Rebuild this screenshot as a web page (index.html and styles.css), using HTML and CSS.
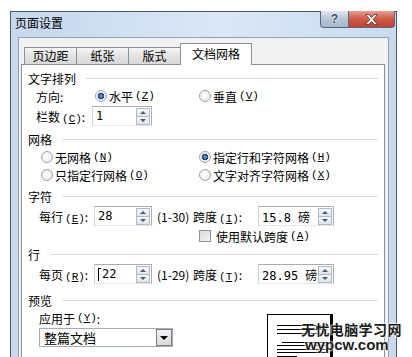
FILE: index.html
```html
<!DOCTYPE html>
<html>
<head>
	<meta charset="utf-8">
	<title>页面设置</title>
	<link rel="stylesheet" href="styles.css">
</head>
<body>
	<div class="window">
		<div class="titlebar">
			<span class="title">页面设置</span>
			<div class="caption">
				<span class="btn-help">?</span>
				<span class="btn-close">
					<svg width="13" height="11" viewBox="0 0 13 11"><path d="M0.5 0.5h3.2l2.8 3 2.8-3h3.2l-4.4 5 4.4 5h-3.2l-2.8-3-2.8 3h-3.2l4.4-5z" fill="#fff" stroke="#5b2a24" stroke-width="0.8"/></svg>
				</span>
			</div>
		</div>

		<div class="client">
			<div class="tabs">
				<span class="tab">页边距</span>
				<span class="tab">纸张</span>
				<span class="tab">版式</span>
				<span class="tab active">文档网格</span>
			</div>

			<div class="page">
				<div class="group">
					<div class="sec">文字排列</div>
					<div class="row dir-row">
						<span class="lbl-dir">方向:</span>
						<span class="opt opt-dir"><i class="radio on"></i>水平<span class="key">(<u>Z</u>)</span></span>
						<span class="opt"><i class="radio"></i>垂直<span class="key">(<u>V</u>)</span></span>
					</div>
					<div class="row field dir-row">
						<span class="lbl-cols">栏数<span class="key">(<u>C</u>)</span>:</span>
						<span class="box w60">1<i class="spin"><b class="up"></b><b class="down"></b></i></span>
					</div>
				</div>

				<div class="group">
					<div class="sec">网格</div>
					<div class="row grid-row">
						<span class="opt opt-grid"><i class="radio"></i>无网格<span class="key">(<u>N</u>)</span></span>
						<span class="opt"><i class="radio on"></i>指定行和字符网格<span class="key">(<u>H</u>)</span></span>
					</div>
					<div class="row grid-row">
						<span class="opt opt-grid"><i class="radio"></i>只指定行网格<span class="key">(<u>O</u>)</span></span>
						<span class="opt"><i class="radio"></i>文字对齐字符网格<span class="key">(<u>X</u>)</span></span>
					</div>
				</div>

				<div class="group">
					<div class="sec">字符</div>
					<div class="row field num-row">
						<span class="lbl-num">每行<span class="key">(<u>E</u>)</span>:</span>
						<span class="box w58">28<i class="spin"><b class="up"></b><b class="down"></b></i></span>
						<span class="range">(1-30)</span>
						<span class="lbl-pitch">跨度<span class="key">(<u>I</u>)</span>:</span>
						<span class="box w76">15.8 磅<i class="spin"><b class="up"></b><b class="down"></b></i></span>
					</div>
					<div class="row check-row">
						<i class="check"></i>使用默认跨度<span class="key">(<u>A</u>)</span>
					</div>
				</div>

				<div class="group tight">
					<div class="sec">行</div>
					<div class="row field num-row">
						<span class="lbl-num">每页<span class="key">(<u>R</u>)</span>:</span>
						<span class="box w58"><i class="ibeam"></i>22<i class="spin"><b class="up"></b><b class="down"></b></i></span>
						<span class="range">(1-29)</span>
						<span class="lbl-pitch">跨度<span class="key">(<u>T</u>)</span>:</span>
						<span class="box w76">28.95 磅<i class="spin"><b class="up"></b><b class="down"></b></i></span>
					</div>
				</div>

				<div class="group wide">
					<div class="sec">预览</div>
					<div class="preview-row">
						<div class="apply">
							<div class="row">应用于<span class="key">(<u>Y</u>)</span>:</div>
							<div class="select">整篇文档<i class="drop"></i></div>
						</div>
						<div class="sheet">
							<svg width="62" height="44" viewBox="0 0 62 44">
								<g stroke="#000" stroke-width="1">
									<path d="M9 10.5h50M9 14.5h50M9 18.5h50M14 27.5h45M9 30.5h50M9 34.5h50M9 37.5h50M9 41.5h20"/>
								</g>
							</svg>
						</div>
					</div>
				</div>
			</div>
		</div>
	</div>

	<div class="watermark">
		<div class="wm-cn">无忧电脑学习网</div>
		<div class="wm-en">wypcw.com</div>
	</div>
</body>
</html>
```

FILE: styles.css
```css
body {
	margin: 0;
	height: 357px;
	overflow: hidden;
	background: #fff;
	font-family: "Noto Sans CJK SC", "Microsoft YaHei", sans-serif;
	font-size: 12px;
	color: #000;
	position: relative;
}

/* window frame */
.window {
	margin: 11px 0 0 10px;
	width: 387px;
	height: 346px;
	box-sizing: border-box;
	border: 1px solid #4a586c;
	border-bottom: none;
	background: #cbd9ea;
}
.titlebar {
	height: 25px;
	display: flex;
	justify-content: space-between;
	align-items: flex-start;
	background: linear-gradient(to right, #c5d8ee, #dbe7f5 55%, #c9dbef);
}
.title {
	padding: 3px 0 0 4px;
	line-height: 16px;
}
.caption {
	display: flex;
	margin: -1px 1px 0 0;
}
.btn-help,
.btn-close {
	height: 17px;
	box-sizing: border-box;
	border: 1px solid #59657a;
	border-top: none;
	display: flex;
	align-items: center;
	justify-content: center;
}
.btn-help {
	width: 28px;
	border-right: none;
	border-radius: 0 0 0 4px;
	background: linear-gradient(#dfe6ef, #b9c6d6 50%, #a7b7cb);
	color: #3b4a60;
	font: bold 12px "Liberation Sans", sans-serif;
	text-shadow: 0 0 2px #fff, 0 0 1px #fff;
}
.btn-close {
	width: 47px;
	border-radius: 0 0 4px 0;
	background: linear-gradient(#e5a093, #cf5a47 50%, #c0432f);
}

.client {
	margin: 0 7px;
	height: 314px;
	border: 1px solid #8fa0b6;
	border-bottom: none;
	background: #f2f2f2;
	padding: 5px 3px 0 2px;
}

/* tabs */
.tabs {
	display: flex;
	align-items: flex-end;
	padding-left: 3px;
	height: 21px;
	position: relative;
	z-index: 1;
}
.tab {
	width: 53px;
	height: 17px;
	box-sizing: border-box;
	margin-left: -1px;
	border: 1px solid #8c8f97;
	border-bottom: none;
	background: linear-gradient(#f6f6f6, #e3e3e3 50%, #d8d8d8);
	text-align: center;
	line-height: 16px;
}
.tab:first-child {
	margin-left: 0;
}
.tab.active {
	width: 72px;
	height: 22px;
	margin-bottom: -1px;
	background: #fff;
	line-height: 20px;
}

.page {
	height: 287px;
	border: 1px solid #8c8f97;
	border-bottom: none;
	background: #fff;
	padding-top: 5px;
	overflow: hidden;
}

/* groups and rows */
.group + .group {
	margin-top: 5px;
}
.group.tight {
	margin-top: 2px;
}
.group.wide {
	margin-top: 8px;
}
.sec {
	display: flex;
	align-items: center;
	height: 16px;
	padding: 0 6px;
}
.sec::after {
	content: "";
	flex: 1;
	margin-left: 10px;
	border-top: 1px solid #d8dde3;
}
.row {
	display: flex;
	align-items: center;
	height: 16px;
	margin-top: 2px;
	white-space: nowrap;
}
.row.field {
	height: 20px;
}
.key {
	margin-left: 2px;
	font-family: "Liberation Mono", monospace;
	font-size: 11px;
}
.opt {
	display: flex;
	align-items: center;
}

.dir-row {
	padding-left: 14px;
}
.lbl-dir {
	width: 59px;
}
.opt-dir {
	width: 104px;
}
.lbl-cols {
	width: 56px;
}
.grid-row {
	padding-left: 19px;
}
.opt-grid {
	width: 158px;
}
.num-row {
	padding-left: 17px;
}
.lbl-num {
	width: 55px;
}
.range {
	width: 36px;
	margin-left: 5px;
}
.lbl-pitch {
	width: 65px;
}
.check-row {
	padding-left: 177px;
}

/* controls */
.radio {
	width: 12px;
	height: 12px;
	box-sizing: border-box;
	margin-right: 2px;
	border: 1px solid #a0a4a9;
	border-radius: 50%;
	background: radial-gradient(circle at 45% 45%, #fff, #e2e3e5);
}
.radio.on {
	background: radial-gradient(circle at 50% 50%, #8fb6dc 0, #2a5a94 2px, #21476f 3px, #e9edf2 3.6px, #f6f7f8);
}
.check {
	width: 12px;
	height: 12px;
	box-sizing: border-box;
	margin-right: 5px;
	border: 1px solid #8e9297;
	background: linear-gradient(135deg, #d8d9db, #f6f6f6);
}
.box {
	height: 20px;
	box-sizing: border-box;
	display: flex;
	align-items: center;
	padding-left: 3px;
	border: 1px solid #abadb3;
	border-left-color: #cfd2d8;
	border-bottom-color: #e3e6ea;
	background: #fff;
	font-family: "DejaVu Sans Mono", "Noto Sans CJK SC", monospace;
	font-size: 12px;
}
.w58 {
	width: 58px;
}
.w60 {
	width: 60px;
}
.w76 {
	width: 76px;
}
.spin {
	margin-left: auto;
	margin-right: 1px;
	width: 14px;
	height: 17px;
	display: flex;
	flex-direction: column;
}
.spin b {
	flex: 1;
	box-sizing: border-box;
	border: 1px solid #b1bac8;
	background: linear-gradient(#f6f8fb, #dde4ed);
	display: flex;
	align-items: center;
	justify-content: center;
}
.spin b + b {
	border-top: none;
}
.spin b::after {
	content: "";
	border-left: 3px solid transparent;
	border-right: 3px solid transparent;
}
.spin .up::after {
	border-bottom: 3px solid #4d5a6c;
}
.spin .down::after {
	border-top: 3px solid #4d5a6c;
}
.ibeam {
	width: 2px;
	height: 12px;
	margin-right: 1px;
	border-left: 1px solid #000;
	border-top: 1px solid #000;
}

.preview-row {
	display: flex;
	align-items: flex-start;
	padding-left: 17px;
	margin-top: 2px;
}
.apply {
	width: 134px;
}
.apply .row {
	margin-top: 0;
}
.select {
	margin-top: 2px;
	height: 19px;
	box-sizing: border-box;
	display: flex;
	align-items: center;
	padding-left: 4px;
	border: 1px solid #a5acb5;
	font-size: 13px;
}
.drop {
	margin-left: auto;
	width: 16px;
	height: 17px;
	box-sizing: border-box;
	border: 1px solid #7a7e85;
	background: linear-gradient(#f3f3f3, #d9d9d9);
	display: flex;
	align-items: center;
	justify-content: center;
}
.drop::after {
	content: "";
	border-left: 4px solid transparent;
	border-right: 4px solid transparent;
	border-top: 4px solid #000;
}
.sheet {
	margin: 4px 0 0 94px;
	width: 66px;
	height: 44px;
	box-sizing: border-box;
	border: 1px solid #000;
	border-right: 3px solid #000;
	border-bottom: none;
	background: #fff;
}
.sheet svg {
	display: block;
}

/* site watermark over the screenshot */
.watermark {
	position: absolute;
	left: 301px;
	top: 321px;
	color: #1c1c1c;
	font-weight: bold;
	text-shadow: 0 0 2px #fff, 0 0 2px #fff, 0 0 3px #fff;
}
.wm-cn {
	font-size: 14px;
	letter-spacing: 0.4px;
	line-height: 16px;
}
.wm-en {
	margin-left: 4px;
	font-family: "Liberation Sans", Arial, sans-serif;
	font-size: 15px;
	line-height: 15px;
}
```
